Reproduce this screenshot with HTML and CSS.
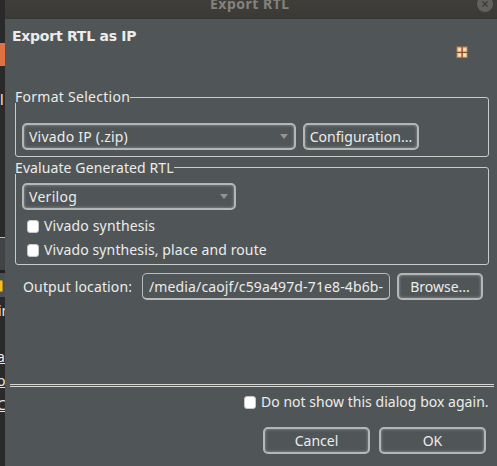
FILE: index.html
```html
<!DOCTYPE html>
<html lang="en">
<head>
<meta charset="utf-8">
<title>Export RTL</title>
<link rel="stylesheet" href="styles.css">
</head>
<body>
<div class="desktop">
  <aside class="behind">
    <div class="tab-accent"></div>
    <span class="frag frag-l">l</span>
    <div class="pane-edge"></div>
    <div class="tree-row"><i class="folder"></i></div>
    <span class="frag frag-in">in</span>
    <span class="frag link link-a">a</span>
    <span class="frag link link-o">o</span>
    <span class="frag link link-c">C</span>
  </aside>
  <main class="dialog">
    <header class="titlebar">
      <span class="title">Export RTL</span>
      <svg class="close" width="16" height="16" viewBox="0 0 16 16"><circle cx="8" cy="8" r="8" fill="#62615d"/><path d="M5.4 5.4l5.2 5.2M10.6 5.4l-5.2 5.2" stroke="#383733" stroke-width="1.3"/></svg>
    </header>
    <section class="heading">
      <h1>Export RTL as IP</h1>
      <svg class="logo" width="12" height="13" viewBox="0 0 12 13"><path d="M.5.5h11v11.500h-11z" fill="#bd7c4e"/><path d="M1.500 1.500h4v4.200h-4zM6.700 1.500h4v4.200h-4zM1.500 7h4v4h-4zM6.700 7h4v4h-4z" fill="#f3cb9c"/><path d="M2.800 2.800h1.700v1.700H2.800zM7.700 2.800h1.700v1.700H7.700zM2.800 8h1.700v1.700H2.800zM7.700 8h1.700v1.700H7.700z" fill="#fff0d5"/><path d="M0 6.400h12M6.100 0v13" stroke="#804323" stroke-width=".9"/></svg>
    </section>
    <section class="group format">
      <h2><span class="t-format">Format Selection</span></h2>
      <div class="row">
        <div class="control select wide"><span class="t-zip">Vivado IP (.zip)</span><i class="arrow"></i></div>
        <button class="control config"><span class="t-config">Configuration...</span></button>
      </div>
    </section>
    <section class="group evaluate">
      <h2><span class="t-eval">Evaluate Generated RTL</span></h2>
      <div class="control select lang"><span class="t-verilog">Verilog</span><i class="arrow"></i></div>
      <label class="check"><i class="box"></i><span class="t-syn">Vivado synthesis</span></label>
      <label class="check"><i class="box"></i><span class="t-route">Vivado synthesis, place and route</span></label>
    </section>
    <section class="output">
      <span class="caption"><span class="t-output">Output location:</span></span>
      <div class="field"><span class="t-path">/media/caojf/c59a497d-71e8-4b6b-</span></div>
      <button class="control browse"><span class="t-browse">Browse...</span></button>
    </section>
    <footer class="footer">
      <label class="check again"><i class="box"></i><span class="t-again">Do not show this dialog box again.</span></label>
      <div class="actions">
        <button class="control action"><span class="t-cancel">Cancel</span></button>
        <button class="control action"><span class="t-ok">OK</span></button>
      </div>
    </footer>
  </main>
</div>
</body>
</html>
```
FILE: styles.css
```css
* { box-sizing: border-box; }
body {
  margin: 0;
  font: 14px/20px "Noto Sans", "Open Sans", sans-serif;
  color: #ececea;
  background: #505658;
}
.desktop {
  display: grid;
  grid-template-columns: 5px 492px;
  height: 466px;
  overflow: hidden;
}

/* Sliver of the window behind the dialog */
.behind {
  display: flex;
  flex-direction: column;
  overflow: hidden;
  background: #2a2a2a;
}
.tab-accent { flex: none; height: 23px; margin-top: 43px; background: #df7143; }
.frag { flex: none; height: 20px; white-space: nowrap; }
.frag-l { margin-top: 24px; }
.pane-edge {
  flex: none;
  height: 36px;
  margin-top: 127px;
  border-top: 1px solid #b9b9b5;
  border-bottom: 3px solid #222;
  background: #414344;
}
.tree-row { flex: none; height: 24px; padding-top: 7px; background: #4b5153; }
.folder {
  display: block;
  width: 3px;
  height: 12px;
  border: 1px solid #bd8d13;
  border-left: 0;
  border-radius: 0 2px 2px 0;
  background: #efc12c;
}
.frag-in { margin-top: 4px; margin-left: -2px; }
.link { height: 17px; line-height: 20px; border-bottom: 1px solid #e4e4e0; margin-left: -3px; }
.link-a { margin-top: 26px; }
.link-o { margin-top: 7px; }
.link-c { margin-top: 7px; }

.dialog { background: #505658; }
.titlebar {
  display: flex;
  height: 19px;
  padding: 0 4px 0 205px;
  justify-content: space-between;
  align-items: flex-start;
  background: linear-gradient(#403e3a, #3b3a36);
  border-bottom: 1px solid #353531;
  overflow: hidden;
}
.title { font: bold 14px/20px "Noto Sans", sans-serif; color: #84827c; margin-top: -6px; letter-spacing: .5px; }
.close { margin-top: -4px; }
.heading { display: flex; justify-content: space-between; height: 78px; padding: 7px 29px 0 7px; }
h1 { margin: 0; font: bold 14px/20px "DejaVu Sans", sans-serif; letter-spacing: -.25px; white-space: nowrap; }
.logo { margin-top: 20px; }

.group {
  width: 474px;
  margin-left: 10px;
  border: 1px solid #c9cbc9;
  border-radius: 3px;
  padding: 0 6px;
}
.format { height: 60px; }
.evaluate { height: 98px; margin-top: 10px; }
h2 { width: max-content; height: 12px; margin: -6px 0 0 -7px; font: inherit; line-height: 11px; background: #505658; white-space: nowrap; }
.format h2 { margin-top: -7px; }
.row { display: flex; gap: 7px; margin-top: 20px; }
.control {
  display: flex;
  align-items: center;
  justify-content: center;
  height: 27px;
  padding: 0;
  border: 2px solid #b4b7b6;
  border-radius: 5px;
  background: #505658;
  box-shadow: inset 0 0 3px #9a9e9e;
  color: #ececea;
  font: inherit;
  white-space: nowrap;
}
.select { justify-content: space-between; padding: 0 6px 0 5px; }
.wide { width: 274px; }
.config { width: 116px; }
.lang { width: 214px; margin-top: 9px; }
.arrow { border: 4.5px solid transparent; border-top: 5px solid #96938e; border-bottom: 0; }
.check { display: flex; align-items: center; gap: 5px; height: 24px; padding-left: 5px; white-space: nowrap; }
.lang + .check { margin-top: 4px; }
.box { flex: none; width: 12px; height: 13px; border: 1px solid #c6c8c7; border-radius: 3px; background: #fff; }

.output { display: flex; height: 27px; margin-top: 8px; padding-left: 18px; }
.caption { width: 119px; line-height: 27px; white-space: nowrap; }
.field {
  width: 248px;
  margin-right: 7px;
  padding-left: 6px;
  line-height: 25px;
  border: 1px solid #b9bbba;
  border-bottom-width: 2px;
  border-radius: 5px;
  white-space: nowrap;
  overflow: hidden;
}
.browse { width: 86px; }
.footer {
  width: 484px;
  margin: 84px 0 0 5px;
  border-top: 3px double #d5d7d5;
  padding-right: 8px;
}
.again { margin: 3px 0 0 229px; }
.actions { display: flex; justify-content: flex-end; gap: 9px; margin-top: 13px; }
.action { width: 107px; }

/* Tracking per label */
.t-format { letter-spacing: .27px; }
.t-zip { letter-spacing: .22px; }
.t-config { letter-spacing: .04px; }
.t-eval { letter-spacing: .1px; }
.t-verilog { letter-spacing: .3px; }
.t-syn { letter-spacing: .15px; }
.t-route { letter-spacing: .12px; }
.t-output { letter-spacing: .15px; }
.t-path { letter-spacing: .13px; }
.t-again { letter-spacing: .03px; }
```
